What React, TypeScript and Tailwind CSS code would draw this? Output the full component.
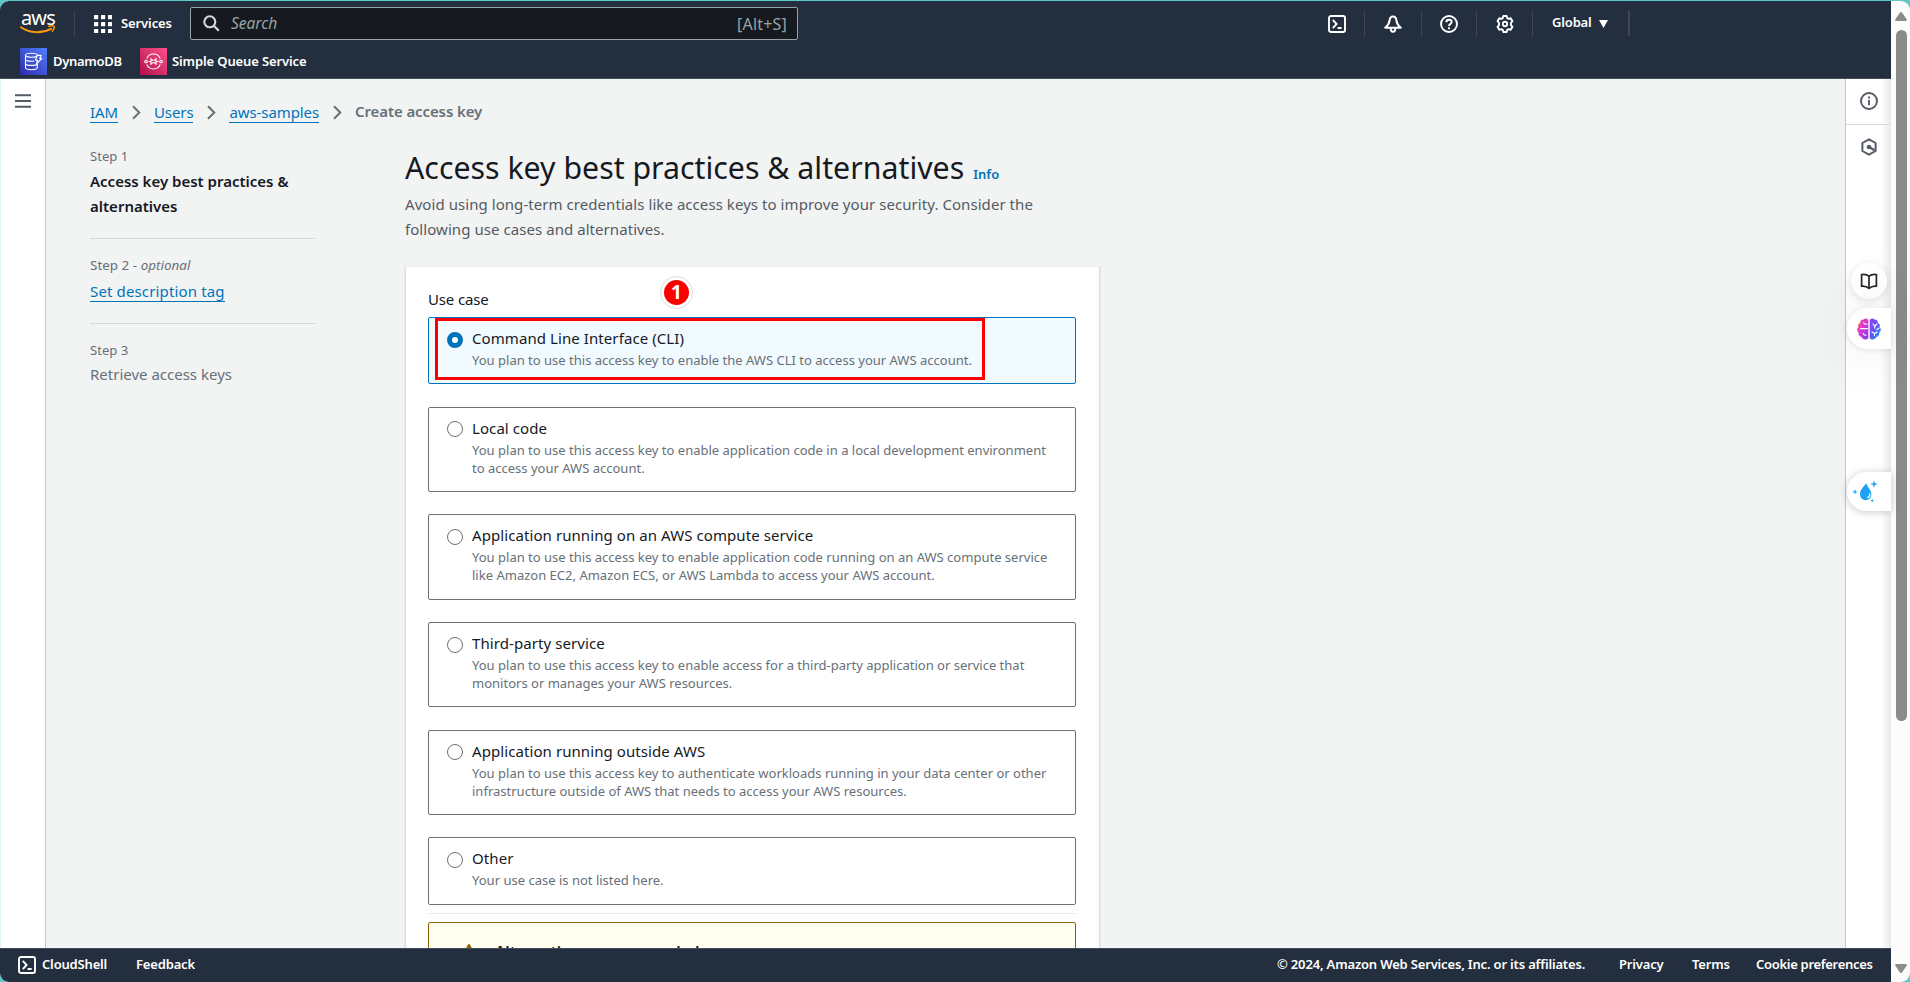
import type { ReactNode } from "react";

type UseCase = { title: string; lines: string[]; selected?: boolean };

const useCases: UseCase[] = [
  {
    title: "Command Line Interface (CLI)",
    lines: ["You plan to use this access key to enable the AWS CLI to access your AWS account."],
    selected: true,
  },
  {
    title: "Local code",
    lines: [
      "You plan to use this access key to enable application code in a local development environment",
      "to access your AWS account.",
    ],
  },
  {
    title: "Application running on an AWS compute service",
    lines: [
      "You plan to use this access key to enable application code running on an AWS compute service",
      "like Amazon EC2, Amazon ECS, or AWS Lambda to access your AWS account.",
    ],
  },
  {
    title: "Third-party service",
    lines: [
      "You plan to use this access key to enable access for a third-party application or service that",
      "monitors or manages your AWS resources.",
    ],
  },
  {
    title: "Application running outside AWS",
    lines: [
      "You plan to use this access key to authenticate workloads running in your data center or other",
      "infrastructure outside of AWS that needs to access your AWS resources.",
    ],
  },
  { title: "Other", lines: ["Your use case is not listed here."] },
];

function AwsLogo() {
  return (
    <div className="flex h-[25px] w-[36px] flex-col">
      <span className="h-[15px] pl-px text-[20px] leading-[13px] font-normal tracking-[-0.9px] text-white">aws</span>
      <svg className="-mt-px h-[9px] w-[36px] shrink-0" viewBox="0 0 36 9" fill="none" stroke="#f90" strokeLinecap="round">
        <path d="M1 2.2C10 8.4 22 8.6 31 3.8" strokeWidth="2" />
        <path d="M28.6 1.4C31 .7 33.5.7 34.1 1.2c.5.7-.2 3.2-1.8 5" strokeWidth="1.4" />
      </svg>
    </div>
  );
}

function Terminal() {
  return (
    <svg className="size-[18px] shrink-0" viewBox="0 0 18 18" fill="none" stroke="#fff" strokeWidth="1.9">
      <rect x="1" y="1" width="16" height="16" rx="2" />
      <path d="M4.8 4.8 8.6 9l-3.8 4.2M9.6 13h4" />
    </svg>
  );
}

function Bell() {
  return (
    <svg className="size-[18px]" viewBox="0 0 18 18" fill="none" stroke="#fff" strokeWidth="2" strokeLinejoin="round">
      <path d="M9 1.6C6.8 1.6 5.8 3.2 5.6 5.400 5.300 8.600 3.800 10.600 1.200 12.700h15.600C14.200 10.600 12.700 8.600 12.400 5.400 12.200 3.200 11.200 1.600 9 1.600Z" />
      <path d="M6.7 13.2c0 2 1 3.600 2.300 3.600s2.300-1.600 2.300-3.600" />
    </svg>
  );
}

function Help() {
  return (
    <svg className="size-[18px]" viewBox="0 0 18 18" fill="none" stroke="#fff" strokeWidth="1.9">
      <circle cx="9" cy="9" r="8" />
      <path d="M6.3 7.2C6.3 5.6 7.4 4.7 9 4.7s2.7.9 2.7 2.3c0 1.9-2.7 1.9-2.7 4" />
      <path d="M9 12.2v2" />
    </svg>
  );
}

function Gear() {
  return (
    <svg className="size-[18px]" viewBox="0 0 18 18" fill="none" stroke="#fff" strokeWidth="1.9" strokeLinejoin="round">
      <path d="M7.3 1h3.4l.5 2.1 1.3.8 2.2-.7 1.8 3-1.6 1.6v2.4l1.6 1.6-1.8 3-2.2-.7-1.3.8-.5 2.1H7.3l-.5-2.1-1.3-.8-2.2.7-1.8-3 1.6-1.6V7.8L1.5 6.2l1.8-3 2.2.7 1.3-.8Z" />
      <circle cx="9" cy="9" r="2.2" />
    </svg>
  );
}

function InfoIcon() {
  return (
    <svg className="size-[18px]" viewBox="0 0 18 18" fill="none" stroke="#545b64" strokeWidth="1.9">
      <circle cx="9" cy="9" r="8" />
      <path d="M9 8v5.2M9 4.6v2" />
    </svg>
  );
}

function HexIcon() {
  return (
    <svg className="size-[18px]" viewBox="0 0 18 18" fill="none" stroke="#545b64" strokeWidth="2" strokeLinejoin="round">
      <path d="M9 1.3 15.6 5v8L9 16.7 2.4 13V5Z" />
      <circle cx="9" cy="9" r="2.300" fill="#545b64" stroke="none" />
      <path d="M9 9l5.600 3.200" strokeWidth="2.300" />
    </svg>
  );
}

function DynamoIcon() {
  return (
    <div className="flex size-[27px] items-center justify-center bg-linear-to-tr from-[#2e27ad] to-[#527fff]">
      <svg className="size-[19px]" viewBox="0 0 19 19" fill="none" stroke="#fff" strokeWidth="1.1">
        <ellipse cx="7.4" cy="3.2" rx="5.9" ry="2" />
        <path d="M1.5 3.2v12.4c0 1.2 2.6 2.2 5.9 2.2s5.9-1 5.9-2.2V11.5M1.5 7.2c0 1.2 2.6 2 5.9 2 1 0 1.9 0 2.7-.2M1.5 11.4c0 1.2 2.6 2 5.9 2s5.9-.8 5.9-2M13.3 3.2v.6" />
        <path d="M13.2 3.4h4l-1.5 3.1h2.1l-5.3 5.4 1.1-3.7h-2.1Z" strokeLinejoin="round" />
      </svg>
    </div>
  );
}

function SqsIcon() {
  return (
    <div className="flex size-[27px] items-center justify-center bg-linear-to-tr from-[#b0084d] to-[#ff4f8b]">
      <svg className="size-[19px]" viewBox="0 0 19 19" fill="none" stroke="#fff" strokeWidth="1.1">
        <path d="M2.8 6.6a7.2 7.2 0 0 1 13.4 0M2.8 12.4a7.2 7.2 0 0 0 13.4 0" />
        <circle cx="2" cy="9.5" r="1.3" />
        <circle cx="17" cy="9.5" r="1.3" />
        <path d="M4.6 9.5h1.8M12.6 9.5h1.8M7 6.8l1.4 1.4h2.2L12 6.8v5.4l-1.4-1.4H8.4L7 12.2Z" />
      </svg>
    </div>
  );
}

function Chevron() {
  return (
    <svg className="mt-[2px] h-[15px] w-[9px] shrink-0" viewBox="0 0 9 15" fill="none" stroke="#687078" strokeWidth="2">
      <path d="m1 1.2 6.3 6.3L1 13.8" />
    </svg>
  );
}

function Crumb({ children }: { children: ReactNode }) {
  return (
    <a className="h-[23px] shrink-0 border-b border-[#0073bb] leading-[24px] tracking-[-0.1px] text-[#0073bb]">{children}</a>
  );
}

function HeaderSlot({ children, width }: { children: ReactNode; width: string }) {
  return <div className={`flex h-[25px] shrink-0 items-center justify-center border-r border-[#414750] ${width}`}>{children}</div>;
}

function Header() {
  return (
    <header className="flex h-[78px] shrink-0 flex-col border-b border-[#414d5c] bg-[#232f3e] text-[13px] font-semibold tracking-[-0.17px] text-white">
      <div className="flex h-[45px] items-center pl-[20px]">
        <AwsLogo />
        <div className="ml-[18px] h-[25px] w-px bg-[#414750]" />
        <svg className="ml-[19px] size-[18px] shrink-0" viewBox="0 0 18 18" fill="#fff">
          {[0, 7, 14].map((y) => [0, 7, 14].map((x) => <rect key={`${x}-${y}`} x={x} y={y} width="4.2" height="4.2" rx=".5" />))}
        </svg>
        <span className="ml-[9px] w-[51px] tracking-[-0.1px]">Services</span>
        <div className="ml-[18px] flex h-[33px] w-[608px] items-center rounded-[2px] border border-[#95a5a6] bg-[#161920] pr-[10px] pl-[12px] text-[15.5px] font-normal tracking-normal text-[#95a5a6]">
          <svg className="size-[17px]" viewBox="0 0 17 17" fill="none" stroke="#d5dbdb" strokeWidth="2.1">
            <circle cx="6.8" cy="6.8" r="5.5" />
            <path d="m10.8 10.8 5 5" />
          </svg>
          <span className="ml-[11px] italic">Search</span>
          <span className="ml-auto text-[16px] tracking-[0.2px]">[Alt+S]</span>
        </div>
        <div className="ml-auto flex w-[582px] items-center">
          <HeaderSlot width="w-[56px] pl-[1px]"><Terminal /></HeaderSlot>
          <HeaderSlot width="w-[57px]"><Bell /></HeaderSlot>
          <HeaderSlot width="w-[55px]"><Help /></HeaderSlot>
          <HeaderSlot width="w-[56px]"><Gear /></HeaderSlot>
          <div className="flex h-[25px] w-[97px] items-center border-r-2 border-[#414750] pl-[19px]">
            <span className="-mt-[2px] w-[40px]">Global</span>
            <svg className="ml-[7px] h-[8px] w-[9px]" viewBox="0 0 9 8" fill="#fff"><path d="M0 0h9L4.5 8Z" /></svg>
          </div>
        </div>
      </div>
      <div className="flex h-[32px] items-center pb-px pl-[20px]">
        <DynamoIcon />
        <span className="ml-[6px] w-[87px] tracking-[-0.3px]">DynamoDB</span>
        <SqsIcon />
        <span className="ml-[5px] tracking-[-0.12px]">Simple Queue Service</span>
      </div>
    </header>
  );
}

function Steps() {
  return (
    <nav className="w-[225px] shrink-0 text-[15px] leading-[25px] text-[#687078]">
      <div className="h-[92px] border-b border-[#d5dbdb]">
        <p className="text-[13.1px] leading-[18px]">Step 1</p>
        <p className="mt-[4px] font-semibold text-[#16191f]">
          Access key best practices &amp;
          <br />
          alternatives
        </p>
      </div>
      <div className="h-[85px] border-b border-[#d5dbdb] pt-[17px]">
        <p className="text-[13.4px] leading-[18px] tracking-[0.03px]">
          Step 2 - <i>optional</i>
        </p>
        <a className="mt-[5px] inline-block h-[23px] border-b border-[#0073bb] leading-[24px] tracking-[0.14px] text-[#0073bb]">
          Set description tag
        </a>
      </div>
      <div className="pt-[17px]">
        <p className="text-[13.1px] leading-[18px]">Step 3</p>
        <p className="mt-[3px]">Retrieve access keys</p>
      </div>
    </nav>
  );
}

function Tile({ item }: { item: UseCase }) {
  return (
    <div
      className={`relative flex rounded-[2px] border pt-[8px] pb-[14.2px] pl-[18px] ${
        item.selected ? "border-[#0073bb] bg-[#f1faff]" : "border-[#687078] bg-white"
      }`}
    >
      <div
        className={`mt-[5.5px] size-[16px] shrink-0 rounded-full bg-white ${
          item.selected ? "border-[5px] border-[#0073bb]" : "border border-[#687078]"
        }`}
      />
      <div className="ml-[9px]">
        <p className="text-[15px] leading-[25px] tracking-[0.08px] text-[#16191f]">{item.title}</p>
        {item.lines.map((line) => (
          <p key={line} className="text-[13.03px] leading-[18px] whitespace-nowrap text-[#687078]">
            {line}
          </p>
        ))}
      </div>
      {item.selected && (
        <>
          <div className="absolute top-0 left-[6px] h-[62px] w-[550px] border-[3px] border-[#fa0000]" />
          <div className="absolute -top-[42px] left-[231px] flex size-[33px] items-center justify-center rounded-full border border-[#dcdcdc] bg-white">
            <div className="flex size-[25px] items-center justify-center rounded-full bg-[#fa0000] text-[19px] leading-none font-bold text-white">
              1
            </div>
          </div>
        </>
      )}
    </div>
  );
}

function Content() {
  return (
    <main className="flex min-w-0 flex-1 flex-col overflow-hidden bg-[#f2f3f3] pt-[20px] pl-[44px]">
      <div className="flex h-[25px] items-center text-[15px] leading-[25px] text-[#687078]">
        <Crumb>IAM</Crumb>
        <div className="ml-[14px]"><Chevron /></div>
        <div className="ml-[13px] flex"><Crumb>Users</Crumb></div>
        <div className="ml-[14px]"><Chevron /></div>
        <div className="ml-[13px] flex"><Crumb>aws-samples</Crumb></div>
        <div className="ml-[14px]"><Chevron /></div>
        <span className="ml-[13px] font-semibold tracking-[-0.1px]">Create access key</span>
      </div>
      <div className="mt-[23px] flex">
        <Steps />
        <div className="ml-[90px] w-[695px] shrink-0">
          <h1 className="flex h-[40px] items-baseline text-[30.3px] leading-[42px] whitespace-nowrap text-[#16191f]">
            Access key best practices &amp; alternatives
            <a className="ml-[9px] text-[13px] leading-[20px] font-semibold text-[#0073bb]">Info</a>
          </h1>
          <p className="mt-[5px] text-[15px] leading-[25px] tracking-[0.06px] whitespace-nowrap text-[#545b64]">
            Avoid using long-term credentials like access keys to improve your security. Consider the
            <br />
            following use cases and alternatives.
          </p>
          <section className="mt-[24px] border border-[#d9dddd] border-t-[#eaeded] bg-white pt-[20px] pr-[23px] pl-[22px] shadow-[0_1px_1px_rgba(0,28,36,0.2)]">
            <h2 className="text-[15px] leading-[25px] tracking-[-0.15px] text-[#16191f]">Use case</h2>
            <div className="mt-[5px] flex flex-col gap-[22.5px]">
              {useCases.map((item) => (
                <Tile key={item.title} item={item} />
              ))}
            </div>
            <div className="mt-[8px] h-px bg-[#eaeded]" />
            <div className="mt-[8px] flex h-[110px] rounded-[2px] border border-[#8d6605] bg-[#fffef0] pt-[17px] pl-[31px]">
              <svg className="mt-[4px] size-[18px]" viewBox="0 0 18 18" fill="none" stroke="#8d6605" strokeWidth="2" strokeLinejoin="round">
                <path d="M9 1.4 1.4 16.6h15.2Z" fill="#8d6605" strokeWidth="2.6" />
                <path d="M9 6.5v5M9 13v2" stroke="#fffef0" />
              </svg>
              <p className="ml-[17px] text-[15.4px] leading-[25px] font-semibold text-[#16191f]">Alternatives recommended</p>
            </div>
          </section>
        </div>
      </div>
    </main>
  );
}

function Extensions() {
  return (
    <>
      <div className="absolute top-[263px] left-[1851px] flex size-[36px] items-center justify-center rounded-full bg-white shadow-[0_2px_10px_rgba(0,0,0,0.12)]">
        <svg className="h-[17px] w-[18px]" viewBox="0 0 18 17" fill="none" stroke="#262626" strokeWidth="1.7" strokeLinejoin="round">
          <path d="M9 3.2C7 1.6 4.2 1.2 1.6 1.6v11.6C4.2 12.9 7 13.6 9 15.4c2-1.8 4.8-2.5 7.4-2.2V1.6C13.8 1.2 11 1.6 9 3.2ZM9 3.2v12" />
        </svg>
      </div>
      <div className="absolute top-[308px] left-[1847px] flex h-[41px] w-[44px] items-center rounded-l-full bg-white pl-[10px] shadow-[0_0_60px_rgba(0,0,0,0.1),0_1px_6px_rgba(0,0,0,0.1)]">
        <svg className="h-[22px] w-[24px]" viewBox="0 0 24 22">
          <defs>
            <linearGradient id="lobeLeft" x1="0" y1="0" x2="1" y2="1">
              <stop offset="0" stopColor="#f7941e" />
              <stop offset=".35" stopColor="#e838c8" />
              <stop offset="1" stopColor="#7a3df0" />
            </linearGradient>
            <linearGradient id="lobeRight" x1="0" y1="0" x2="1" y2="1">
              <stop offset="0" stopColor="#9b3df2" />
              <stop offset=".55" stopColor="#5a5cf5" />
              <stop offset="1" stopColor="#17b4fa" />
            </linearGradient>
          </defs>
          <path fill="url(#lobeLeft)" d="M11.3 2.3C10.8.3 7.8-.3 6.7 1.6 4.5 1.2 2.8 3 3.2 5 1.2 5.6.7 7.6 1.5 9-.3 10.4-.2 13.4 1.700 14.500c-.5 2.3 1 3.9 2.7 4.2.8 2.6 5 4 6.9 1.2Z" />
          <path fill="url(#lobeRight)" d="M12.700 2.300c.5-2 3.500-2.600 4.600-.7 2.200-.4 3.900 1.400 3.500 3.400 2 .6 2.500 2.600 1.700 4 1.800 1.400 1.700 4.400-.2 5.500.5 2.300-1 3.900-2.700 4.200-.8 2.600-5 4-6.900 1.200Z" />
          <path fill="none" stroke="#fff" strokeWidth="1.1" strokeLinecap="round" d="M3.5 10.6h7M10 6c-1.500.5-2.800 0-3.300-1.300M6.300 15.500c.3 1.200 1.300 1.900 2.600 1.600M16 6l1.800 2.200L20 6M17.800 8.200v2M22 10l-2.200 1.700M15 14l2.500 1.500 2.500-1.500M17.500 15.500v2" />
        </svg>
      </div>
      <div className="absolute top-[472px] left-[1847px] h-[39px] w-[44px] rounded-l-full bg-white pt-[8px] pl-[5px] shadow-[0_1px_8px_rgba(0,0,0,0.22)]">
        <svg className="h-[24px] w-[28px]" viewBox="0 0 28 24" fill="#1da1f2">
          <path d="M14.3 3.2c-2.300 3-6.300 6.300-6.300 11.100a5.700 5.900 0 0 0 11.400 0c0-2-1-3.800-2-5.200-1.300-1.900-2.400-3.700-3.100-5.900Z" />
          <path d="m22 .2.900 3 3.1.9-3.1.9-.9 3-.9-3-3.1-.9 3.1-.9ZM3 9l.7 2.2 2.3.7-2.3.7L3 14.800l-.7-2.200-2.300-.7 2.300-.7ZM20.200 18.800l.5 1.500 1.500.5-1.500.5-.5 1.500-.5-1.500-1.500-.5 1.500-.5Z" />
          <path d="M17.600 13.800c.4 1.800-.3 3.200-2 3.800" fill="none" stroke="#fff" strokeWidth="1.300" strokeLinecap="round" />
        </svg>
      </div>
    </>
  );
}

export default function App() {
  return (
    <div className="relative h-[982px] w-[1910px] overflow-hidden bg-[#5cc8c8] pt-px font-['Noto_Sans','Liberation_Sans',sans-serif]">
      <div className="flex h-[981px] overflow-hidden rounded-[9px] bg-[#fcfcfc]">
        <div className="flex min-w-0 flex-1 flex-col">
          <Header />
          <div className="flex min-h-0 flex-1">
            <aside className="flex w-[46px] shrink-0 justify-center border-r border-l border-r-[#c3c8c8] border-l-[#e2f5f5] bg-white pt-[15px]">
              <svg className="h-[14px] w-[16px]" viewBox="0 0 16 14" stroke="#545b64" strokeWidth="2">
                <path d="M0 1.3h16M0 7h16M0 12.7h16" />
              </svg>
            </aside>
            <Content />
            <aside className="flex w-[46px] shrink-0 flex-col border-l border-[#c3c8c8] bg-linear-to-l from-[#e9e9e9] via-white via-[22%] to-white">
              <div className="flex h-[46px] items-center justify-center border-b border-[#d5dbdb] pb-px"><InfoIcon /></div>
              <div className="flex h-[46px] items-center justify-center pb-[2px]"><HexIcon /></div>
            </aside>
          </div>
          <footer className="flex h-[34px] shrink-0 items-center border-t border-[#414d5c] bg-[#232f3e] pb-px pl-[18px] text-[13px] font-semibold tracking-[-0.17px] text-white">
            <Terminal />
            <span className="ml-[6px] w-[94px]">CloudShell</span>
            <span>Feedback</span>
            <div className="ml-auto flex pr-[18px]">
              <span className="w-[342px]">© 2024, Amazon Web Services, Inc. or its affiliates.</span>
              <span className="w-[73px]">Privacy</span>
              <span className="w-[64px]">Terms</span>
              <span className="w-[117px] tracking-[-0.3px] whitespace-nowrap">Cookie preferences</span>
            </div>
          </footer>
        </div>
        <div className="flex w-[19px] shrink-0 flex-col items-center pt-[11px] pl-px">
          <svg className="h-[9px] w-[12px]" viewBox="0 0 12 9" fill="#8b8b8b"><path d="M6 0q.6 0 1 .6L11.8 7.5Q12 9 11 9H1Q0 9 .2 7.500L5 .6Q5.400 0 6 0Z" /></svg>
          <div className="mt-[9px] h-[691px] w-[11px] rounded-full bg-[#8b8b8b]" />
          <svg className="mt-[243px] h-[9px] w-[12px]" viewBox="0 0 12 9" fill="#8b8b8b"><path d="M6 9q.6 0 1-.6L11.8 1.5Q12 0 11 0H1Q0 0 .2 1.500L5 8.400Q5.400 9 6 9Z" /></svg>
        </div>
      </div>
      <Extensions />
    </div>
  );
}
